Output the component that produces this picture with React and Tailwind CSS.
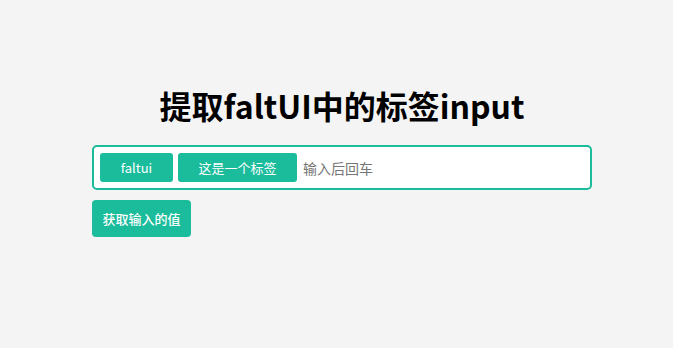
export default function App() {
  return (
    <div
      className="min-h-[348px] w-full bg-[#f4f4f4] pl-[11px] pt-[83px]"
      style={{ fontFamily: '"Noto Sans CJK SC", "Noto Sans", sans-serif' }}
    >
      <div className="mx-auto w-[500px]">
        <h1 className="text-center text-[32px] font-bold leading-[44px] text-black">
          提取faltUI中的标签input
        </h1>

        <div className="mt-[18px] flex h-[45px] items-center gap-[5px] rounded-[5px] border-2 border-[#1abc9c] bg-white px-[6px]">
          <span className="flex h-[29px] w-[73px] items-center justify-center rounded-[3px] bg-[#1abc9c] text-[13px] text-white">
            faltui
          </span>
          <span className="flex h-[29px] w-[119px] items-center justify-center rounded-[3px] bg-[#1abc9c] text-[13px] text-white">
            这是一个标签
          </span>
          <input
            className="ml-[1px] h-full flex-1 bg-transparent text-[14px] text-[#333] outline-none placeholder:text-[#757575]"
            placeholder="输入后回车"
          />
        </div>

        <button className="mt-[10px] flex h-[37px] w-[99px] items-center justify-center rounded-[4px] bg-[#1abc9c] text-[13px] font-medium text-white">
          获取输入的值
        </button>
      </div>
    </div>
  );
}
